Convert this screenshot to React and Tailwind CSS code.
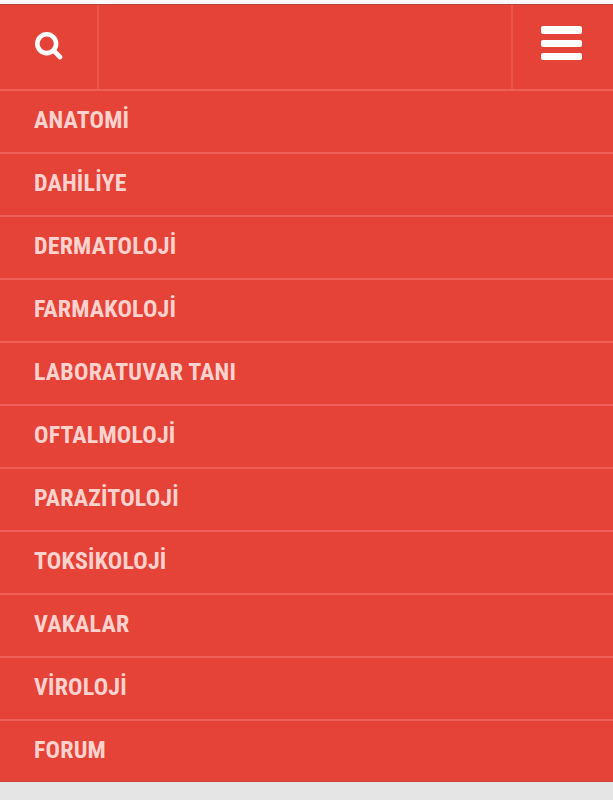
const menuItems = [
  "ANATOMİ",
  "DAHİLİYE",
  "DERMATOLOJİ",
  "FARMAKOLOJİ",
  "LABORATUVAR TANI",
  "OFTALMOLOJİ",
  "PARAZİTOLOJİ",
  "TOKSİKOLOJİ",
  "VAKALAR",
  "VİROLOJİ",
  "FORUM",
];

function SearchIcon() {
  return (
    <svg
      className="h-[28px] w-[28px]"
      viewBox="0 0 28 28"
      fill="none"
      stroke="currentColor"
      strokeWidth="4.6"
      strokeLinecap="round"
      aria-hidden="true"
    >
      <circle cx="11.7" cy="11.7" r="9.4" />
      <path d="M18.4 18.4 25 25" />
    </svg>
  );
}

export default function App() {
  return (
    <div className="min-h-screen bg-[#e5e5e5] font-['Roboto_Condensed',Roboto,sans-serif]">
      <div className="h-1 bg-[#fafafa]" />
      <nav className="bg-[#e54338]">
        <div className="flex h-[85px] justify-between border-t border-[#b9453c] text-white">
          <button
            type="button"
            aria-label="Ara"
            className="flex w-[99px] items-start border-r-2 border-[#ea544b] pt-[27px] pl-[35px]"
          >
            <SearchIcon />
          </button>
          <button
            type="button"
            aria-label="Menü"
            className="flex w-[102px] flex-col gap-[6px] border-l-2 border-[#ea544b] pt-[21px] pl-[28px]"
          >
            <span className="h-[8px] w-[41px] rounded-[2px] bg-white" />
            <span className="h-[7px] w-[41px] rounded-[2px] bg-white" />
            <span className="h-[7px] w-[41px] rounded-[2px] bg-white" />
          </button>
        </div>
        <ul className="border-b border-[#c9453c]">
          {menuItems.map((item) => (
            <li
              key={item}
              className="h-[63px] border-t-2 border-[#ef6058] pl-[34px] last:h-[62px]"
            >
              <a
                href="#"
                className="inline-block text-[24px] leading-[58px] font-bold tracking-[0.16px] text-[#ffd2ce] font-stretch-75%"
              >
                {item}
              </a>
            </li>
          ))}
        </ul>
      </nav>
    </div>
  );
}
